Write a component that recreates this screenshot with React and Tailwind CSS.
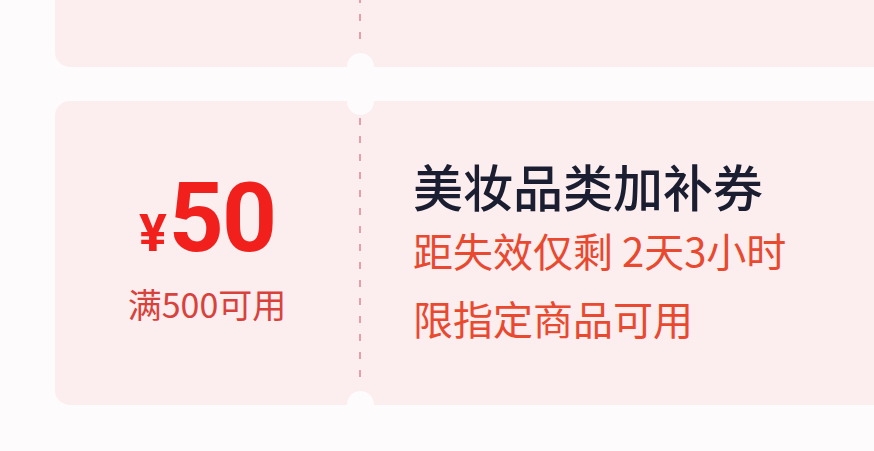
import React from 'react';

const cjk = { fontFamily: '"Noto Sans CJK SC", "Noto Sans", sans-serif' };

function Coupon({ className = '', children, notchTop = false, notchBottom = false }) {
  return (
    <div className={`relative flex h-[304px] w-[860px] rounded-[15px] bg-[#fcedef] ${className}`}>
      {children}
      {notchTop && (
        <div className="absolute left-[292px] top-[-14px] h-[28px] w-[27px] rounded-full bg-[#fdfbfb]" />
      )}
      {notchBottom && (
        <div className="absolute left-[292px] bottom-[-14px] h-[28px] w-[27px] rounded-full bg-[#fdfbfb]" />
      )}
    </div>
  );
}

function Divider() {
  return (
    <div className="flex w-[2px] shrink-0 py-[17px]">
      <div className="w-[2px] flex-1 bg-[repeating-linear-gradient(to_bottom,#e89ea6_0_7px,transparent_7px_18px)]" />
    </div>
  );
}

export default function App() {
  return (
    <div className="h-[451px] w-[874px] overflow-hidden bg-[#fdfbfb]" style={cjk}>
      <div className="flex flex-col gap-[34px] pl-[55px]">
        <Coupon className="-mt-[237px]" notchBottom>
          <div className="w-[304px] shrink-0" />
          <Divider />
        </Coupon>

        <Coupon notchTop notchBottom>
          <div className="flex w-[304px] shrink-0 flex-col items-center justify-center pb-[10px]">
            <div
              className="flex items-baseline font-bold text-[#f2201c] leading-[96px]"
              style={{ fontFamily: 'Roboto, "Liberation Sans", sans-serif' }}
            >
              <span className="mr-[2px] text-[52px]">¥</span>
              <span className="text-[96px] tracking-[-2px]">50</span>
            </div>
            <div className="text-[34px] leading-[44px] text-[#d8423c]">满500可用</div>
          </div>
          <Divider />
          <div className="flex flex-col justify-center pl-[52px]">
            <div className="text-[50px] font-medium leading-[62px] text-[#1b1d31]">美妆品类加补券</div>
            <div className="text-[40px] leading-[68px] text-[#e8492f]">距失效仅剩 2天3小时</div>
            <div className="text-[40px] leading-[68px] text-[#e8492f]">限指定商品可用</div>
          </div>
        </Coupon>
      </div>
    </div>
  );
}
